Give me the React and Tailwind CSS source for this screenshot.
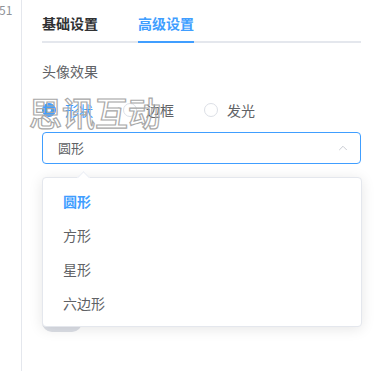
import { ChevronUp } from 'lucide-react';

const options = ['圆形', '方形', '星形', '六边形'];

function Radio({ label, checked }) {
  return (
    <label className="flex items-center gap-[9px] mr-[30px]">
      <span
        className={
          checked
            ? 'w-[14px] h-[14px] rounded-full border border-[#409eff] bg-[#409eff] flex items-center justify-center'
            : 'w-[14px] h-[14px] rounded-full border border-[#dcdfe6] bg-white'
        }
      >
        {checked && <span className="w-[4px] h-[4px] rounded-full bg-white" />}
      </span>
      <span className={checked ? 'text-[#409eff]' : 'text-[#606266]'}>{label}</span>
    </label>
  );
}

export default function App() {
  return (
    <div className="relative flex w-[381px] h-[371px] bg-white overflow-hidden text-[14px] font-['Noto_Sans_CJK_SC','Noto_Sans',sans-serif]">
      {/* левая колонка */}
      <div className="w-[22px] shrink-0 border-r border-[#e4e7ed] overflow-hidden">
        <div className="text-[12px] text-[#909399] leading-none mt-[4px] -ml-[1px]">51</div>
      </div>

      <div className="flex-1 pl-[20px] pr-[20px]">
        {/* вкладки */}
        <div className="relative flex h-[40px] mt-[3px] border-b-2 border-[#e4e7ed]">
          <div className="pr-[20px] leading-[40px] font-semibold text-[#303133]">基础设置</div>
          <div className="relative px-[20px] leading-[40px] font-semibold text-[#409eff]">
            高级设置
            <div className="absolute left-[20px] right-[20px] -bottom-[2px] h-[2px] bg-[#409eff]" />
          </div>
        </div>

        <div className="mt-[18px] text-[#606266] leading-[20px]">头像效果</div>

        <div className="flex items-center mt-[18px] h-[22px]">
          <Radio label="形状" checked />
          <Radio label="边框" />
          <Radio label="发光" />
        </div>

        {/* селект */}
        <div className="mt-[11px] h-[32px] border border-[#409eff] rounded-[4px] flex items-center justify-between pl-[15px] pr-[10px]">
          <span className="text-[#606266] text-[13px]">圆形</span>
          <ChevronUp className="w-[14px] h-[14px] text-[#c0c4cc]" strokeWidth={1.5} />
        </div>

        <div className="mt-[148px] w-[40px] h-[20px] rounded-full bg-[#dcdfe6]" />
      </div>

      {/* выпадающий список */}
      <div className="absolute left-[42px] top-[177px] w-[320px] bg-white border border-[#e4e7ed] rounded-[4px] shadow-[0_2px_14px_0_rgba(0,0,0,0.1)] py-[6px]">
        <div className="absolute left-[36px] -top-[5px] w-[9px] h-[9px] bg-white border-l border-t border-[#ebeef5] rotate-45" />
        {options.map((o, i) => (
          <div
            key={o}
            className={
              i === 0
                ? 'h-[34px] leading-[34px] px-[20px] font-bold text-[#409eff]'
                : 'h-[34px] leading-[34px] px-[20px] text-[#606266]'
            }
          >
            {o}
          </div>
        ))}
      </div>

      {/* водяной знак */}
      <div className="absolute left-[29px] top-[92px] text-[33px] leading-[40px] font-medium text-transparent [-webkit-text-stroke:1.2px_#a8a8a8] pointer-events-none">
        思讯互动
      </div>
    </div>
  );
}
